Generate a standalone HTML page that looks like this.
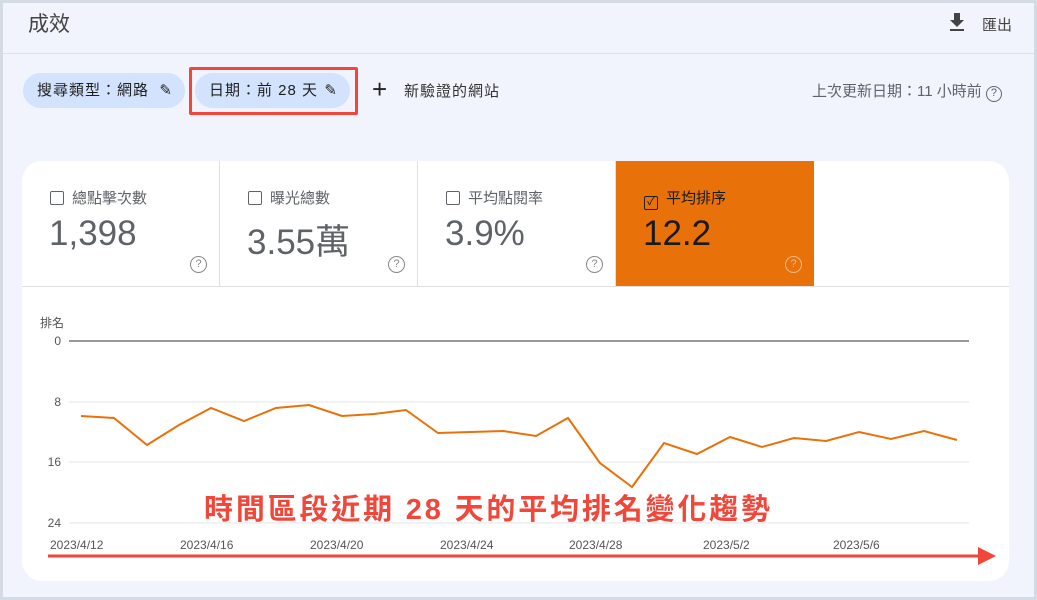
<!DOCTYPE html>
<html><head><meta charset="utf-8"><style>
*{margin:0;padding:0;box-sizing:border-box}
body{width:1037px;height:600px;background:#d5dbe4;font-family:"Liberation Sans","Noto Sans CJK TC",sans-serif;position:relative;overflow:hidden}
.pg{position:absolute;left:3px;top:3px;width:1031px;height:594px;background:#f1f4fc}
.abs{position:absolute}
.chip{position:absolute;top:73px;height:35px;border-radius:18px;background:#d3e3fd;font-size:15px;color:#1f1f1f;line-height:35px;padding-left:14px;letter-spacing:1px}
.tile{position:absolute;top:161px;height:126px;width:198px;border-right:1px solid #e0e0e0;color:#5f6368}
.tile .lb{position:absolute;left:28px;top:26px;font-size:15px}
.tile .cb{display:inline-block;width:14px;height:14px;border:1.5px solid #5f6368;border-radius:2px;vertical-align:-2px;margin-right:8px}
.tile .v{position:absolute;left:27px;top:53px;font-size:35px}
.tile .q{position:absolute;right:12px;bottom:14px;width:17px;height:17px;border:1.5px solid #888;border-radius:50%;font-size:11px;text-align:center;line-height:14px;color:#888}
</style></head><body><div class="pg"></div>
<div class="abs" style="left:28px;top:8px;font-size:21px;color:#444">成效</div>
<div class="abs" style="left:949px;top:12px;width:16px;height:20px">
<svg width="16" height="20"><path d="M5 1h6v7h4l-7 7-7-7h4z M1 17h14v2H1z" fill="#444"/></svg></div>
<div class="abs" style="left:982px;top:14px;font-size:15px;color:#444">匯出</div>
<div class="abs" style="left:3px;top:53px;width:1031px;height:1px;background:#dde1e6"></div>
<div class="chip" style="left:23px;width:162px">搜尋類型：網路 <span style="position:absolute;right:12px;top:0">✎</span></div>
<div class="chip" style="left:195px;width:155px">日期：前 28 天 <span style="position:absolute;right:12px;top:0">✎</span></div>
<div class="abs" style="left:189px;top:67px;width:169px;height:48px;border:3px solid #f0473a;border-radius:2px"></div>
<div class="abs" style="left:372px;top:76px;font-size:26px;color:#222;line-height:26px">+</div>
<div class="abs" style="left:404px;top:80px;font-size:15px;color:#333;letter-spacing:1px">新驗證的網站</div>
<div class="abs" style="left:812px;top:80px;font-size:15px;color:#5f6368">上次更新日期：11 小時前 <span style="display:inline-block;width:16px;height:16px;border:1.5px solid #666;border-radius:50%;font-size:11px;text-align:center;line-height:13px">?</span></div>
<div class="abs" style="left:22px;top:161px;width:987px;height:420px;background:#fff;border-radius:20px"></div>
<div class="tile" style="left:22px"><div class="lb"><span class="cb"></span>總點擊次數</div><div class="v">1,398</div><div class="q">?</div></div>
<div class="tile" style="left:220px"><div class="lb"><span class="cb"></span>曝光總數</div><div class="v">3.55萬</div><div class="q">?</div></div>
<div class="tile" style="left:418px"><div class="lb"><span class="cb"></span>平均點閱率</div><div class="v">3.9%</div><div class="q">?</div></div>
<div class="tile" style="left:616px;background:#e8710a;color:#1a1a1a;border:none"><div class="lb"><span class="cb" style="border-color:#222;font-size:11px;line-height:10px;text-align:center">✓</span>平均排序</div><div class="v">12.2</div><div class="q" style="border-color:#f6b884;color:#f6b884">?</div></div>
<div class="abs" style="left:22px;top:286px;width:987px;height:1px;background:#e0e0e0"></div>
<svg class="abs" style="left:0;top:0" width="1037" height="600">
<g font-family="Liberation Sans,Noto Sans CJK TC,sans-serif" font-size="12" fill="#555">
<text x="40" y="327">排名</text>
<text x="61" y="345" text-anchor="end">0</text><text x="61" y="406" text-anchor="end">8</text><text x="61" y="466" text-anchor="end">16</text><text x="61" y="527" text-anchor="end">24</text>
<text x="50" y="549">2023/4/12</text><text x="180" y="549">2023/4/16</text><text x="310" y="549">2023/4/20</text><text x="440" y="549">2023/4/24</text><text x="569" y="549">2023/4/28</text><text x="703" y="549">2023/5/2</text><text x="833" y="549">2023/5/6</text>
</g>
<line x1="69" y1="341" x2="969" y2="341" stroke="#777" stroke-width="1.5"/>
<line x1="69" y1="402" x2="969" y2="402" stroke="#e5e5e5"/>
<line x1="69" y1="462" x2="969" y2="462" stroke="#e5e5e5"/>
<line x1="69" y1="523" x2="969" y2="523" stroke="#e5e5e5"/>
<polyline fill="none" stroke="#e8710a" stroke-width="2" points="81,416 114,418 147,445 179,425 211,408 244,421 276,408 309,405 342,416 374,414 406,410 438,433 471,432 503,431 536,436 568,418 600,463 632,487 664,443 697,454 730,437 762,447 794,438 826,441 859,432 891,439 924,431 957,440"/>
<line x1="48" y1="556" x2="982" y2="556" stroke="#f0473a" stroke-width="3"/>
<polygon points="978,547 996,556 978,565" fill="#f0473a"/>
<text x="204" y="519" font-family="Liberation Sans,Noto Sans CJK TC,sans-serif" font-size="29" font-weight="bold" fill="#f0473a" textLength="566" lengthAdjust="spacing">時間區段近期 28 天的平均排名變化趨勢</text>
</svg>
</body></html>
